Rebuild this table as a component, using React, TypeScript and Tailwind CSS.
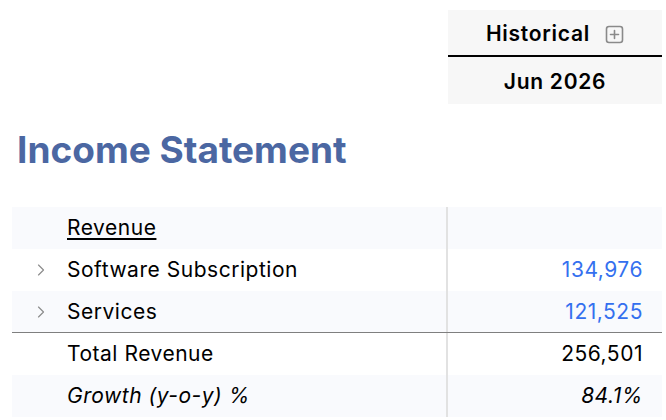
import { ChevronRight } from 'lucide-react';

const ROWS = [
  { label: 'Revenue', value: '', kind: 'heading', shaded: true },
  { label: 'Software Subscription', value: '134,976', kind: 'item', shaded: false },
  { label: 'Services', value: '121,525', kind: 'item', shaded: true, ruled: true },
  { label: 'Total Revenue', value: '256,501', kind: 'total', shaded: false },
  { label: 'Growth (y-o-y) %', value: '84.1%', kind: 'growth', shaded: true },
];

function PlusSquare() {
  return (
    <svg width="19" height="19" viewBox="0 0 19 19" fill="none" className="text-[#8a8a8a]">
      <rect x="1.5" y="1.5" width="16" height="16" rx="2.5" stroke="currentColor" strokeWidth="1.6" />
      <path d="M9.5 5.5v8M5.5 9.5h8" stroke="currentColor" strokeWidth="1.6" strokeLinecap="round" />
    </svg>
  );
}

export default function App() {
  return (
    <div className="w-[666px] h-[420px] bg-white overflow-hidden font-['Inter','Liberation_Sans',sans-serif] text-black">
      <div className="flex justify-end pr-[4px] pt-[10px]">
        <div className="w-[214px] bg-[#f7f7f7]">
          <div className="h-[47px] pt-[3px] flex items-center justify-center gap-[15px] border-b-2 border-black">
            <span className="text-[21px] font-semibold tracking-[0.035em]">Historical</span>
            <PlusSquare />
          </div>
          <div className="h-[47px] pt-[3px] flex items-center justify-center">
            <span className="text-[21px] font-semibold tracking-[0.035em]">Jun 2026</span>
          </div>
        </div>
      </div>

      <h1 className="mt-[27px] pl-[17px] text-[37px] leading-[38px] font-bold text-[#4b67a2]">
        Income Statement
      </h1>

      <div className="mt-[38px] ml-[12px] w-[650px]">
        {ROWS.map(r => (
          <div
            key={r.label}
            className={`flex h-[42px] ${r.shaded ? 'bg-[#f9fafd]' : 'bg-white'} ${r.ruled ? 'border-b-[1.5px] border-[#7f7f7f]' : ''}`}
          >
            <div className="w-[434px] flex items-center">
              <div className="w-[55px] flex justify-center pl-[2px]">
                {r.kind === 'item' && <ChevronRight className="w-[20px] h-[20px] text-[#8c8c8c]" strokeWidth={1.4} />}
              </div>
              <span
                className={`text-[21px] tracking-[0.025em] ${r.kind === 'heading' ? 'underline underline-offset-[3px] decoration-[1.5px]' : ''} ${r.kind === 'growth' ? 'italic' : ''}`}
              >
                {r.label}
              </span>
            </div>
            <div className="w-[216px] border-l-2 border-[#e2e2e2] flex items-center justify-end pr-[19px]">
              <span
                className={`text-[21px] tracking-[0.025em] ${r.kind === 'item' ? 'text-[#3470ef]' : ''} ${r.kind === 'growth' ? 'italic' : ''}`}
              >
                {r.value}
              </span>
            </div>
          </div>
        ))}
      </div>
    </div>
  );
}
